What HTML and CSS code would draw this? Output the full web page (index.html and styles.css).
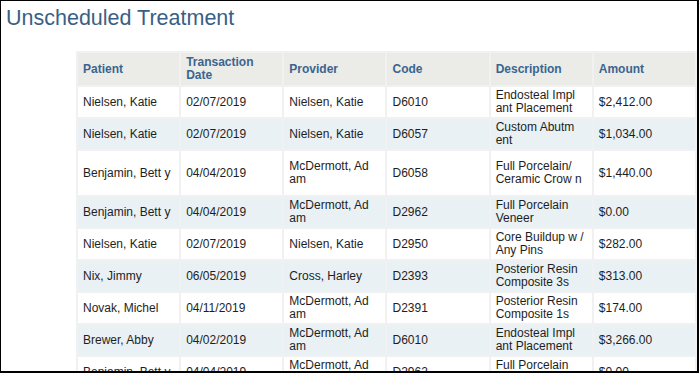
FILE: index.html
```html
<!DOCTYPE html>
<html>
<head>
<meta charset="utf-8">
<link rel="stylesheet" href="styles.css">
</head>
<body>
<div class="frame">
  <h1 class="title">Unscheduled Treatment</h1>
  <table class="grid">
    <colgroup>
      <col class="col"><col class="col"><col class="col"><col class="col"><col class="col"><col class="col">
    </colgroup>
    <thead>
      <tr class="head">
        <th>Patient</th><th>Transaction<br>Date</th><th>Provider</th><th>Code</th><th>Description</th><th>Amount</th>
      </tr>
    </thead>
    <tbody>
      <tr class="odd">
        <td>Nielsen, Katie</td><td>02/07/2019</td><td>Nielsen, Katie</td><td>D6010</td><td>Endosteal Impl<br>ant Placement</td><td>$2,412.00</td>
      </tr>
      <tr class="even">
        <td>Nielsen, Katie</td><td>02/07/2019</td><td>Nielsen, Katie</td><td>D6057</td><td>Custom Abutm<br>ent</td><td>$1,034.00</td>
      </tr>
      <tr class="odd tall">
        <td>Benjamin, Bett y</td><td>04/04/2019</td><td>McDermott, Ad<br>am</td><td>D6058</td><td>Full Porcelain/<br>Ceramic Crow n</td><td>$1,440.00</td>
      </tr>
      <tr class="even">
        <td>Benjamin, Bett y</td><td>04/04/2019</td><td>McDermott, Ad<br>am</td><td>D2962</td><td>Full Porcelain<br>Veneer</td><td>$0.00</td>
      </tr>
      <tr class="odd">
        <td>Nielsen, Katie</td><td>02/07/2019</td><td>Nielsen, Katie</td><td>D2950</td><td>Core Buildup w /<br>Any Pins</td><td>$282.00</td>
      </tr>
      <tr class="even">
        <td>Nix, Jimmy</td><td>06/05/2019</td><td>Cross, Harley</td><td>D2393</td><td>Posterior Resin<br>Composite 3s</td><td>$313.00</td>
      </tr>
      <tr class="odd">
        <td>Novak, Michel</td><td>04/11/2019</td><td>McDermott, Ad<br>am</td><td>D2391</td><td>Posterior Resin<br>Composite 1s</td><td>$174.00</td>
      </tr>
      <tr class="even">
        <td>Brewer, Abby</td><td>04/02/2019</td><td>McDermott, Ad<br>am</td><td>D6010</td><td>Endosteal Impl<br>ant Placement</td><td>$3,266.00</td>
      </tr>
      <tr class="odd">
        <td>Benjamin, Bett y</td><td>04/04/2019</td><td>McDermott, Ad<br>am</td><td>D2962</td><td>Full Porcelain<br>Veneer</td><td>$0.00</td>
      </tr>
    </tbody>
  </table>
</div>
</body>
</html>
```
FILE: styles.css
```css
html, body {
  margin: 0;
  padding: 0;
  background: #fff;
}
.frame {
  box-sizing: border-box;
  width: 699px;
  height: 373px;
  border-top: 1px solid #000;
  border-left: 1px solid #000;
  border-right: 2px solid #000;
  border-bottom: 2px solid #000;
  overflow: hidden;
  padding: 5px 0 0 5px;
  font-family: "Liberation Sans", Arial, sans-serif;
}
.title {
  margin: 0;
  font-size: 21.5px;
  font-weight: normal;
  line-height: 24px;
  color: #3a5f84;
}
.grid {
  margin: 21px 0 0 70px;
  border-collapse: separate;
  border-spacing: 2px;
  table-layout: fixed;
  width: 621px;
  background: #f1f1f1;
  font-size: 12px;
  color: #1e1e1e;
}
.col {
  width: 101px;
}
.grid th,
.grid td {
  padding: 0 4px 0 5px;
  vertical-align: middle;
  text-align: left;
  line-height: 13px;
  white-space: nowrap;
  overflow: hidden;
}
.head th {
  height: 32px;
  background: #ebebe7;
  color: #3a6590;
  font-weight: bold;
}
.grid td {
  height: 30px;
}
.odd td {
  background: #ffffff;
}
.even td {
  background: #e9f1f5;
}
.tall td {
  height: 44px;
}
```
